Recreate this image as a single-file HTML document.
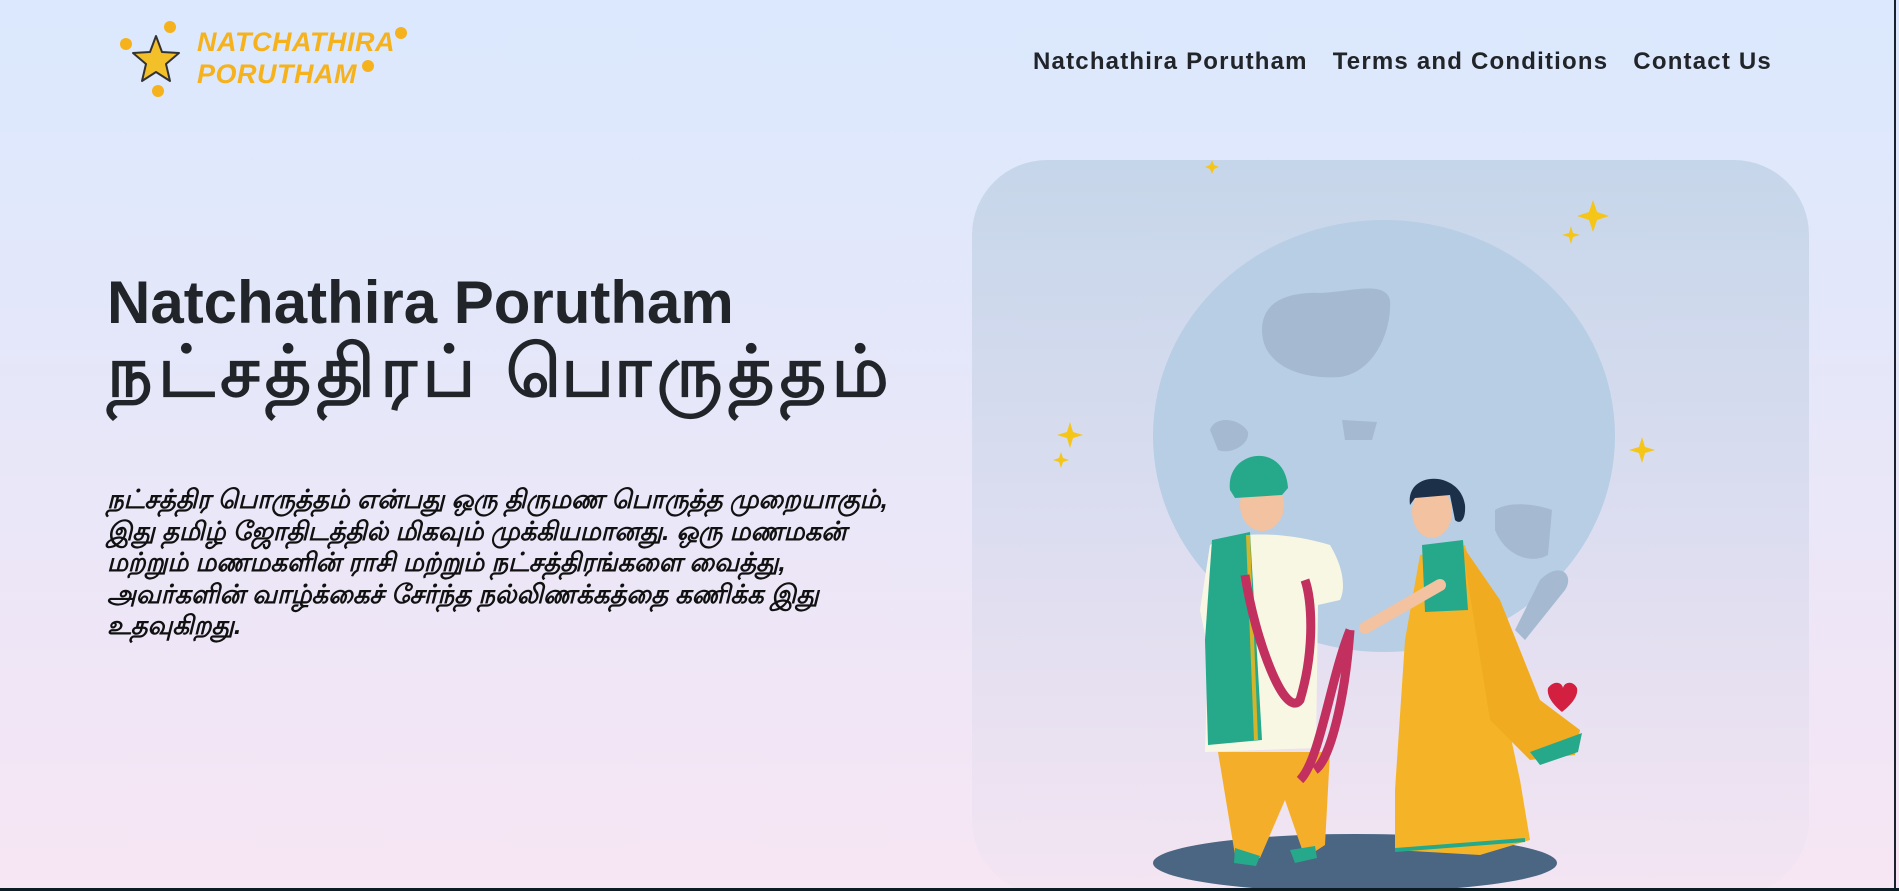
<!DOCTYPE html>
<html><head><meta charset="utf-8"><style>
html,body{margin:0;padding:0;width:1899px;height:891px;overflow:hidden}
body{background:linear-gradient(180deg,#dbe8fd 0%,#e6e7f9 45%,#f7e6f4 100%);font-family:"Liberation Sans",sans-serif;position:relative;color:#212529}
.logo{position:absolute;left:197px;top:26px;color:#f5b21c;font-weight:bold;font-style:italic;font-size:27px;line-height:32px;letter-spacing:0.5px}
nav{position:absolute;top:48px;left:1033px;font-weight:bold;font-size:24px;letter-spacing:1.2px;color:#212529;white-space:nowrap}
nav span{margin-right:25px}
h1{position:absolute;left:107px;top:270px;margin:0;font-size:60px;line-height:66px;font-weight:bold;color:#212529}
h1 .ta{font-weight:bold;font-size:71px;letter-spacing:5.5px;display:block;margin-top:4px}
p{position:absolute;left:107px;top:484px;width:805px;margin:0;font-size:26px;line-height:31.5px;font-style:italic;font-weight:bold;color:#111}
svg{position:absolute;left:0;top:0}
.bar{position:absolute;left:0;bottom:0;width:1899px;height:3px;background:#0b1c24}
.rb{position:absolute;right:3px;top:0;width:2px;height:891px;background:#1a2230}
</style></head><body>
<svg width="1899" height="891" viewBox="0 0 1899 891">
<defs><linearGradient id="cg" x1="0" y1="0" x2="0" y2="1"><stop offset="0" stop-color="#c6d6ea"/><stop offset="0.5" stop-color="#dcddf0"/><stop offset="1" stop-color="#f4e5f2"/></linearGradient></defs>
<g transform="translate(156,60)">
<polygon points="0,-24 6,-8 23,-7 10,4 14,21 0,12 -14,21 -10,4 -23,-7 -6,-8" fill="#f4c02a" stroke="#333" stroke-width="2" stroke-linejoin="round"/>
</g>
<g fill="#f5b21c">
<circle cx="126" cy="44" r="6"/><circle cx="170" cy="27" r="6"/><circle cx="158" cy="91" r="6"/><circle cx="401" cy="33" r="6"/><circle cx="368" cy="66" r="6"/>
</g>
<rect x="972" y="160" width="837" height="735" rx="75" fill="url(#cg)"/>
<ellipse cx="1384" cy="436" rx="231" ry="216" fill="#b7cee5"/>
<path d="M1262 330 C1262 300 1290 292 1320 293 C1350 292 1385 280 1390 300 C1392 330 1375 372 1340 377 C1300 380 1262 365 1262 330Z" fill="#a5bad1"/>
<path d="M1210 430 C1215 415 1240 418 1248 432 C1250 445 1230 455 1218 450Z" fill="#a5bad1"/>
<path d="M1342 420 L1377 422 L1372 440 L1345 440Z" fill="#a5bad1"/>
<path d="M1495 510 C1510 500 1540 505 1552 510 L1548 555 C1530 565 1505 555 1495 530Z" fill="#a5bad1"/>
<path d="M1540 580 C1560 560 1575 575 1565 590 L1525 640 L1515 630Z" fill="#a5bad1"/>
<g fill="#f5c518">
<path d="M1593 200 l4 12 12 4 -12 4 -4 12 -4 -12 -12 -4 12 -4z"/>
<path d="M1571 226 l2 7 7 2 -7 2 -2 7 -2 -7 -7 -2 7 -2z"/>
<path d="M1070 422 l3 10 10 3 -10 3 -3 10 -3 -10 -10 -3 10 -3z"/>
<path d="M1061 452 l2 6 6 2 -6 2 -2 6 -2 -6 -6 -2 6 -2z"/>
<path d="M1642 437 l3 10 10 3 -10 3 -3 10 -3 -10 -10 -3 10 -3z"/>
<path d="M1212 160 l2 5 5 2 -5 2 -2 5 -2 -5 -5 -2 5 -2z"/>
</g>
<ellipse cx="1355" cy="863" rx="202" ry="29" fill="#4a6682"/>
<path d="M1218 752 L1330 752 L1325 845 L1305 858 L1285 800 L1260 858 L1235 855 Z" fill="#f5ae2a"/>
<path d="M1235 848 l25 8 -4 10 -22 -3z M1290 850 l25 -4 2 12 -22 5z" fill="#26a98a"/>
<path d="M1210 545 C1230 532 1280 530 1330 545 C1345 570 1345 590 1340 600 L1318 605 L1316 748 L1205 752 L1208 650 L1200 610 Z" fill="#f8f7e4"/>
<path d="M1212 540 L1250 532 L1262 740 L1208 745 L1205 640Z" fill="#26a98a"/>
<path d="M1248 535 L1256 740" stroke="#d4b42a" stroke-width="4"/>
<ellipse cx="1262" cy="505" rx="22" ry="26" fill="#f3c2a0"/>
<path d="M1230 490 C1225 450 1285 440 1288 488 L1282 495 L1235 498Z" fill="#26a98a"/>
<path d="M1245 575 C1255 640 1285 720 1300 700 C1315 650 1312 600 1305 580" fill="none" stroke="#c2305f" stroke-width="9"/>
<path d="M1350 630 C1330 680 1320 760 1300 780 M1350 630 C1345 700 1330 760 1315 770" fill="none" stroke="#c2305f" stroke-width="9"/>
<path d="M1420 555 L1465 545 L1490 640 L1520 780 L1530 840 L1480 855 L1395 850 L1395 790 L1405 640Z" fill="#f5b427"/>
<path d="M1462 545 L1500 600 L1540 700 L1580 730 L1575 755 L1530 760 L1490 720Z" fill="#f0ab20"/>
<path d="M1530 752 L1582 733 L1578 752 L1540 765Z" fill="#26a98a"/>
<path d="M1548 688 c6 -8 14 -6 15 0 c1 -6 10 -8 14 0 c2 10 -10 20 -15 24 c-5 -4 -16 -14 -14 -24z" fill="#d42040"/>
<path d="M1422 545 L1463 540 L1468 610 L1425 612Z" fill="#26a98a"/>
<path d="M1440 585 L1365 628" stroke="#f3c2a0" stroke-width="12" stroke-linecap="round"/>
<ellipse cx="1432" cy="512" rx="20" ry="26" fill="#f3c2a0"/>
<path d="M1410 505 C1405 470 1460 470 1465 505 C1466 520 1460 525 1455 520 L1450 495 L1415 498Z" fill="#1d3049"/>
<path d="M1395 850 L1525 840" stroke="#26a98a" stroke-width="4"/>
</svg>
<div class="logo">NATCHATHIRA<br>PORUTHAM</div>
<nav><span>Natchathira Porutham</span><span>Terms and Conditions</span><span style="margin:0">Contact Us</span></nav>
<h1>Natchathira Porutham<span class="ta">நட்சத்திரப் பொருத்தம்</span></h1>
<p>நட்சத்திர பொருத்தம் என்பது ஒரு திருமண பொருத்த முறையாகும், இது தமிழ் ஜோதிடத்தில் மிகவும் முக்கியமானது. ஒரு மணமகன் மற்றும் மணமகளின் ராசி மற்றும் நட்சத்திரங்களை வைத்து, அவர்களின் வாழ்க்கைச் சேர்ந்த நல்லிணக்கத்தை கணிக்க இது உதவுகிறது.</p>
<div class="rb"></div><div class="bar"></div>
</body></html>
